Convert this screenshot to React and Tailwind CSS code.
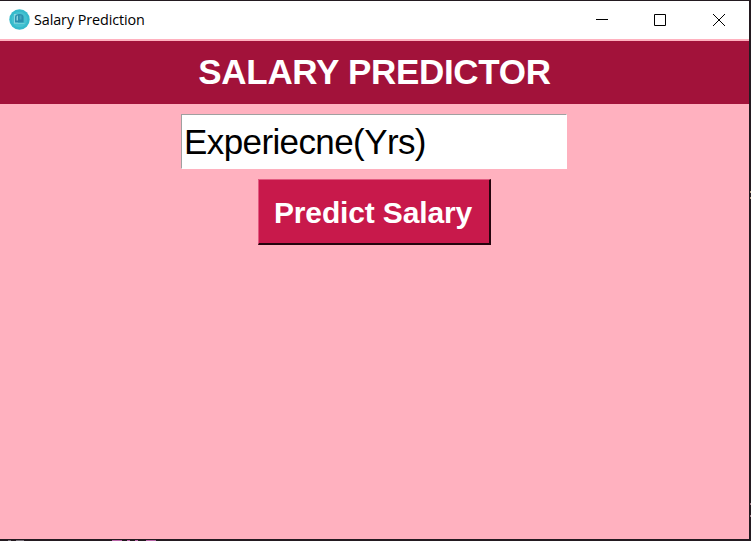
function AppIcon() {
  return (
    <svg className="mb-[2px] h-[21px] w-[21px] shrink-0" viewBox="0 0 21 21">
      <circle cx="10.5" cy="10.5" r="10.2" fill="#35bacb" />
      <circle cx="10.5" cy="10.5" r="7.8" fill="#45c2d1" />
      <path d="M5 5h4v9H5z" fill="#8bd6e0" />
      <path d="M6 13.5V8Q6 5 10.3 5T14.6 8V13.5z" fill="#2a8fae" />
      <path d="M7.5 11.5V8Q7.5 6.5 9 6.5V11.5z" fill="#8bd4df" />
      <path d="M10.5 6.5h2v4h-2z" fill="#43a5bf" />
      <path d="M5 14.5h10.5" stroke="#6fd0da" strokeWidth="1" />
    </svg>
  );
}

function WindowControls() {
  return (
    <div className="flex gap-[46px] text-black">
      <svg className="h-3 w-3" viewBox="0 0 12 12" fill="none" stroke="currentColor">
        <path d="M0 5.5h12" />
      </svg>
      <svg className="h-3 w-3" viewBox="0 0 12 12" fill="none" stroke="currentColor">
        <path d="M.5.5h11v11H.5z" />
      </svg>
      <svg className="ml-px h-3 w-3" viewBox="0 0 12 12" fill="none" stroke="currentColor">
        <path d="M0 0l12 12M12 0L0 12" />
      </svg>
    </div>
  );
}

// Strips of the desktop window that peek out along the dialog's edges.
function RightEdge() {
  return (
    <svg className="h-[538px] w-[2px] shrink-0 bg-[#231a20]" viewBox="0 0 2 538">
      <path d="M1 190h1v2H1zM1 196h1v2H1z" fill="#b5a089" />
      <path d="M1 502h1v2H1zM1 514h1v2H1z" fill="#9c7f88" />
    </svg>
  );
}

function BottomEdge() {
  return (
    <svg className="h-[2px] w-[751px] shrink-0 bg-[#231a20]" viewBox="0 0 751 2">
      <path d="M8 1h3v1H8zM16 1h8v1h-8z" fill="#77717a" />
      <path d="M112 1h10v1h-10zM127 1h3v1h-3zM135 1h3v1h-3zM146 1h10v1h-10z" fill="#b866a8" />
    </svg>
  );
}

export default function App() {
  return (
    <div className="flex h-[541px] w-[751px] flex-col overflow-hidden border-t border-[#231a20] font-['Liberation_Sans',Arial,sans-serif]">
      <div className="flex grow">
        <div className="flex grow flex-col bg-[#ffb1bf]">
          <div className="flex h-[38px] shrink-0 items-center justify-between bg-white pr-6 pl-[9px]">
            <div className="flex items-center gap-1">
              <AppIcon />
              <span className="font-['Open_Sans',sans-serif] text-[14.4px] tracking-[-0.1px] text-black">
                Salary Prediction
              </span>
            </div>
            <WindowControls />
          </div>
          <div className="mt-[2px] flex h-[63px] shrink-0 items-center justify-center bg-[#a2123a] pb-[2px] text-[35px] leading-none font-bold tracking-[-0.3px] whitespace-nowrap text-white">
            SALARY PREDICTOR
          </div>
          <div className="flex flex-col items-center gap-[10px] pt-[10px] pr-px">
            <input
              type="text"
              defaultValue="Experiecne(Yrs)"
              className="h-[55px] w-[386px] rounded-none border border-t-[#a0a0a0] border-r-white border-b-white border-l-[#a0a0a0] bg-white px-[2px] text-[35px] tracking-[-0.6px] text-black outline-none"
            />
            <button className="flex h-[66px] w-[233px] items-center justify-center border-t border-r-2 border-b-2 border-l border-t-[#e35a80] border-r-[#24040d] border-b-[#24040d] border-l-[#e35a80] bg-[#c8194b] pt-[2px] pr-px text-[30px] leading-none font-bold tracking-[-0.15px] whitespace-nowrap text-white">
              Predict Salary
            </button>
          </div>
        </div>
        <RightEdge />
      </div>
      <BottomEdge />
    </div>
  );
}
